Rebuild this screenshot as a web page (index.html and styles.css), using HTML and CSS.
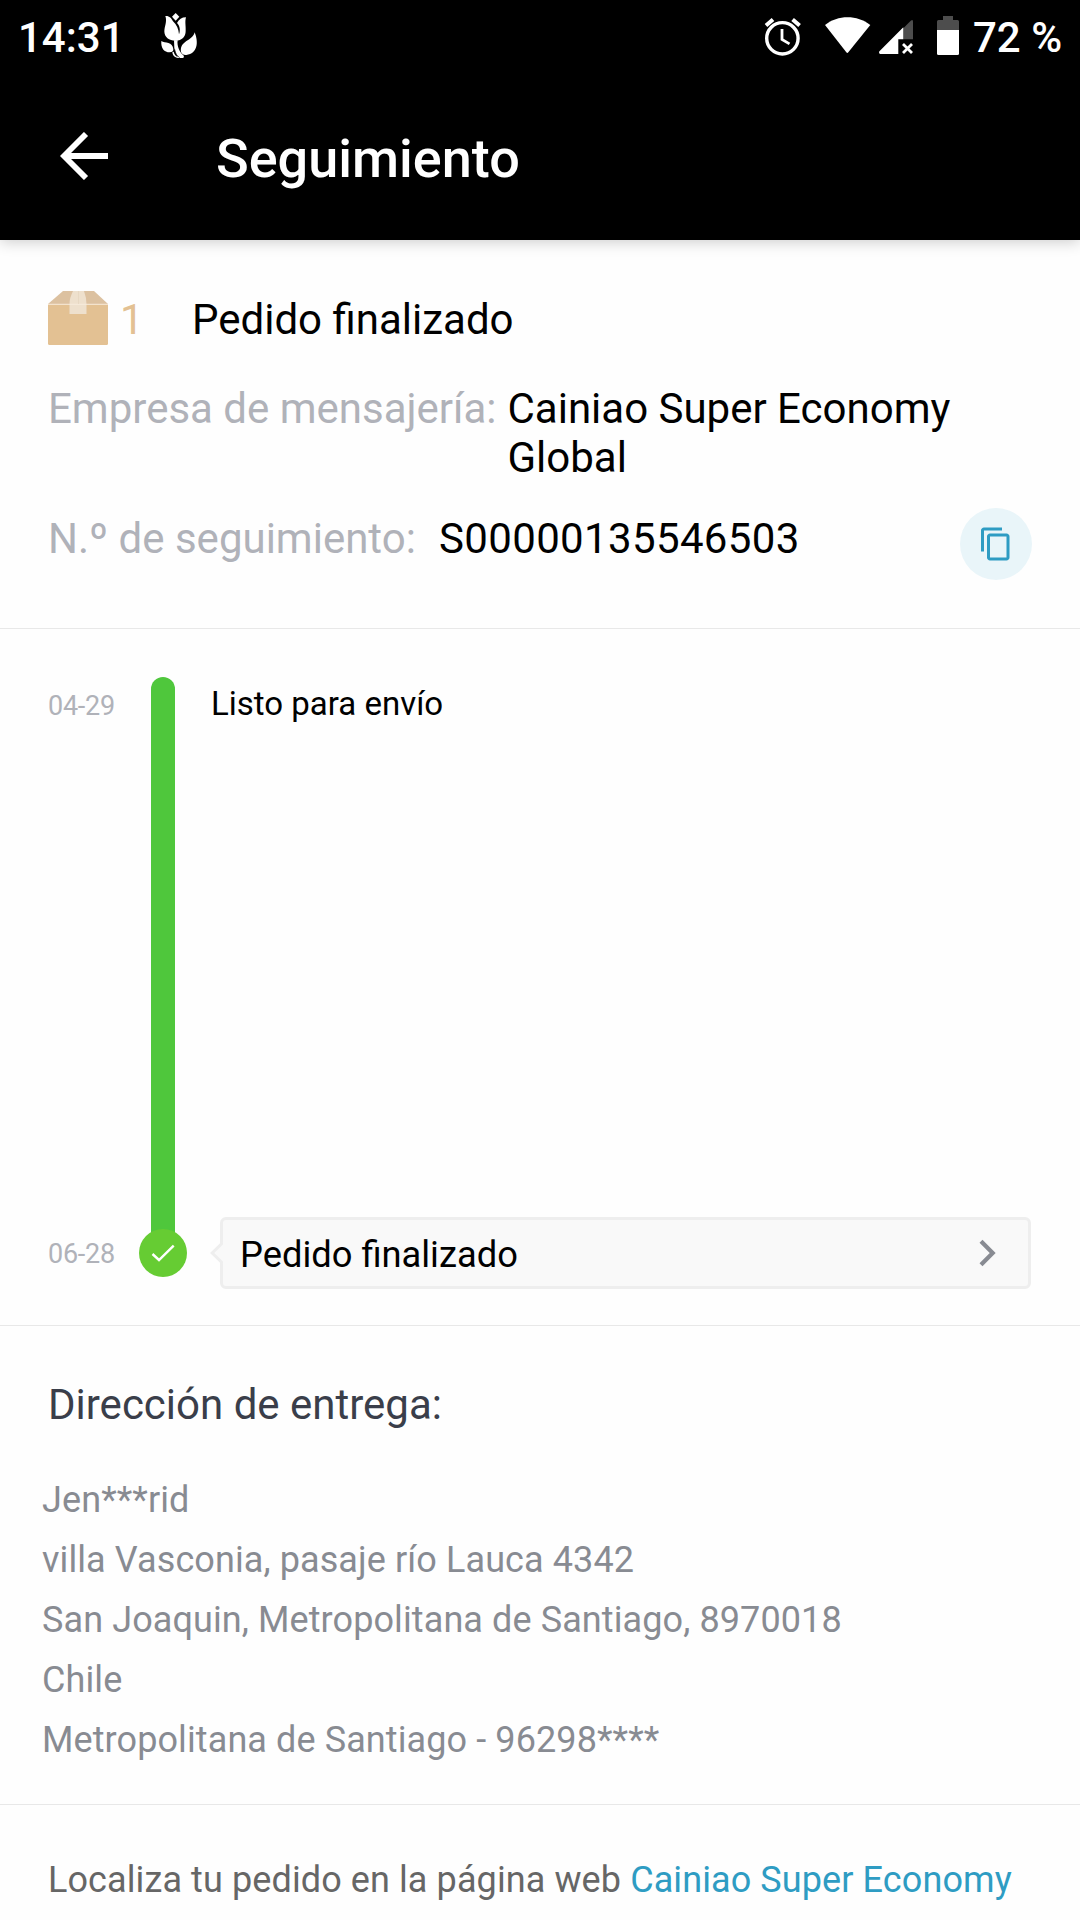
FILE: index.html
```html
<!DOCTYPE html>
<html lang="es">
<head>
<meta charset="utf-8">
<title>Seguimiento</title>
<link rel="stylesheet" href="styles.css">
</head>
<body>
<header class="top">
  <div class="status">
    <span class="clock">14:31</span>
    <svg class="tulip" width="40" height="48" viewBox="480 36 120 144" fill="#fff">
      <path d="M527 39l11 11-11 12-11-12z"/>
      <path d="M496 48C508 47 514 54 519 64C530 74 536 87 537 103C542 90 539 76 531 69C537 58 545 52 558 52C554 66 558 77 557 93C557 110 546 122 527 122C507 122 493 112 493 94C493 79 502 65 496 48z"/>
      <path d="M484 123C495 130 518 124 520 148C520 154 517 157 509 157C493 157 482 145 484 123z"/>
      <path d="M584 97C596 127 593 161 559 165C551 166 546 162 543 156C539 120 577 125 584 97z"/>
      <path d="M522 121H533C530 138 539 157 550 166C553 169 552 174 548 174H535C523 173 518 166 517 157L521 155C523 162 526 168 534 171C527 162 525 153 523 144z"/>
      <path d="M524 148C526 160 531 168 539 173" fill="none" stroke="#000" stroke-width="2"/>
    </svg>
    <div class="indicators">
      <svg class="alarm" width="38" height="40" viewBox="764 17 38 40" fill="none" stroke="#fff">
        <circle cx="782.4" cy="38.3" r="15.7" stroke-width="3.4"/>
        <path d="M782 29v10.5l7.5 4.4" stroke-width="2.8"/>
        <path d="M766 25.4l7-6M799.600 25.400l-7-6" stroke-width="4"/>
      </svg>
      <svg class="wifi" width="48" height="38" viewBox="824 16 48 38" fill="#fff">
        <path d="M825 25C838 14.700 857 14.700 870.300 25L848.300 52.300Q847.300 53.500 846.300 52.300z"/>
      </svg>
      <svg class="signal" width="36" height="36" viewBox="878 19 36 36">
        <path d="M903.300 28.300L911 20.600Q913 19 913 21.500V39.300H903.300z" fill="#4d4d4d"/>
        <path d="M903.300 27.300V39.300H898.300V54H880Q878.500 53.500 879.200 51.600z" fill="#fff"/>
        <path d="M903 44l9 9M912 44l-9 9" stroke="#fff" stroke-width="2.8"/>
      </svg>
      <svg class="battery" width="22" height="40" viewBox="937 16 22 40">
        <path d="M943 16h10v4h4.500q1.500 0 1.500 1.500V31H937V21.500q0-1.500 1.500-1.500H943z" fill="#4d4d4d"/>
        <path d="M937 30h22v23.500q0 1.500-1.500 1.500h-19q-1.500 0-1.500-1.500z" fill="#fff"/>
      </svg>
      <span class="charge">72 %</span>
    </div>
  </div>
  <div class="toolbar">
    <svg class="back" width="48" height="48" viewBox="0 0 48 48" fill="none" stroke="#fff" stroke-width="5.800">
      <path d="M26 2L4 24l22 22M4 24h44"/>
    </svg>
    <h1 class="title">Seguimiento</h1>
  </div>
</header>

<main>
  <section class="summary">
    <div class="row package">
      <svg class="box" width="60" height="54" viewBox="0 0 60 54">
        <path d="M15 0h31l14 13H0z" fill="#dcc1a0"/>
        <path d="M0 13h60v39.500q0 1.500-1.500 1.500h-57Q0 54 0 52.500z" fill="#e3c193"/>
        <path d="M25 0h11q2.500 7 2.500 13v10h-17V13q0-6 3.500-13z" fill="#eee0cd"/>
        <path d="M0 13.300h60" stroke="#f7ecdd"/>
        <path d="M30.500 0v13" stroke="#e3d2bc" stroke-width=".6"/>
      </svg>
      <span class="count">1</span>
      <span class="state">Pedido finalizado</span>
    </div>
    <div class="row carrier">
      <span class="label">Empresa de mensajería:</span>
      <span class="carrier-name">Cainiao Super Economy Global</span>
    </div>
    <div class="row number">
      <span class="label">N.º de seguimiento:</span>
      <span class="code">S00000135546503</span>
      <span class="copy">
        <svg width="36" height="36" viewBox="0 0 24 24" fill="#2e9cc3"><path d="M16 1H4c-1.100 0-2 .9-2 2v14h2V3h12V1zm3 4H8c-1.100 0-2 .9-2 2v14c0 1.100.9 2 2 2h11c1.100 0 2-.9 2-2V7c0-1.100-.9-2-2-2zm0 16H8V7h11v14z"/></svg>
      </span>
    </div>
  </section>

  <section class="timeline">
    <div class="dates"><span>04-29</span><span>06-28</span></div>
    <div class="track">
      <div class="bar"></div>
      <div class="done">
        <svg width="48" height="48" viewBox="0 0 48 48" fill="none" stroke="#fff" stroke-width="2.400"><path d="M13.500 25l6.500 6L34.700 16.700"/></svg>
      </div>
    </div>
    <div class="events">
      <span class="first">Listo para envío</span>
      <div class="last">
        <svg class="notch" width="13" height="22" viewBox="0 0 13 22"><path d="M13 .5L2.200 11 13 21.500" fill="#f9f9f9" stroke="#eee" stroke-width="3"/></svg>
        <span class="last-text">Pedido finalizado</span>
        <svg class="chevron" width="18" height="28" viewBox="0 0 18 28" fill="none" stroke="#888b92" stroke-width="4.200"><path d="M2 2.200L13.700 14 2 25.800"/></svg>
      </div>
    </div>
  </section>

  <section class="delivery">
    <h2>Dirección de entrega:</h2>
    <address>Jen***rid<br>villa Vasconia, pasaje río Lauca 4342<br>San Joaquin, Metropolitana de Santiago, 8970018<br>Chile<br>Metropolitana de Santiago - 96298****</address>
  </section>

  <section class="locate">Localiza tu pedido en la página web <a>Cainiao Super Economy</a></section>
</main>
</body>
</html>
```
FILE: styles.css
```css
* { box-sizing: border-box; }

body {
  margin: 0;
  width: 1080px;
  height: 1920px;
  overflow: hidden;
  background: #fefefe;
  color: #000;
  font-family: Roboto, sans-serif;
  font-size: 42px;
  line-height: 49px;
}

svg { display: block; flex: none; }
span { white-space: nowrap; }

.top {
  height: 240px;
  background: #000;
  color: #fff;
  box-shadow: 0 2px 14px rgba(0, 0, 0, .2);
}

.status {
  display: flex;
  height: 72px;
  padding: 0 18px;
  font-weight: 500;
}
.clock { width: 142px; padding-top: 13px; }
.tulip { margin-top: 12px; }
.indicators { display: flex; margin-left: auto; }
.alarm { margin-top: 17px; }
.wifi { margin: 16px 0 0 22px; }
.signal { margin: 19px 0 0 6px; }
.battery { margin: 16px 0 0 23px; }
.charge { width: 89px; margin-left: 14px; padding-top: 13px; }

.toolbar {
  display: flex;
  align-items: flex-start;
  height: 168px;
  padding-left: 60px;
}
.back { margin-top: 60px; }
.title {
  margin: 55px 0 0 108px;
  font-size: 54px;
  line-height: 64px;
  font-weight: 500;
}

.summary {
  height: 389px;
  padding: 51px 48px 0;
  border-bottom: 1px solid #e8e8e8;
}
.row { display: flex; }
.package { height: 92px; }
.count { width: 72px; margin-left: 12px; padding-top: 4px; color: #e3c193; }
.state { padding-top: 4px; }
.label { color: #b0b2b9; }
.carrier { padding-top: 1px; height: 125px; }
.carrier .label { width: 459.5px; padding-top: 0; }
.carrier-name { width: 470px; white-space: normal; }
.number { align-items: flex-start; }
.number .label { width: 391px; padding-top: 6px; }
.code { padding-top: 6px; letter-spacing: .35px; }
.copy {
  display: grid;
  place-items: center;
  width: 72px;
  height: 72px;
  margin-left: auto;
  border-radius: 50%;
  background: #e9f5f9;
}

.timeline {
  display: flex;
  height: 697px;
  padding: 48px 49px 36px 48px;
  border-bottom: 1px solid #e8e8e8;
}
.dates {
  display: flex;
  flex-direction: column;
  justify-content: space-between;
  width: 91px;
  padding: 13px 0 19px;
  color: #b0b2b9;
  font-size: 27px;
  line-height: 32px;
  letter-spacing: -.25px;
}
.track { display: flex; flex-direction: column; align-items: center; width: 48px; }
.bar { width: 24px; height: 570px; border-radius: 12px 12px 0 0; background: #4fc73c; }
.done {
  width: 48px;
  height: 48px;
  margin-top: -18px;
  border-radius: 50%;
  background: #66cc33;
}
.events {
  display: flex;
  flex: 1;
  flex-direction: column;
  justify-content: space-between;
  padding-left: 24px;
}
.first { padding: 8px 0 0; font-size: 33px; line-height: 38px; }
.last {
  position: relative;
  display: flex;
  align-items: center;
  justify-content: space-between;
  height: 72px;
  margin-left: 9px;
  padding: 0 31px 0 17px;
  border: 3px solid #eee;
  border-radius: 6px;
  background: #f9f9f9;
  font-size: 36.3px;
}
.last-text { padding-top: 3px; }
.notch { position: absolute; left: -13px; top: 22px; }

.delivery {
  height: 479px;
  padding: 54px 42px 0;
  border-bottom: 1px solid #e8e8e8;
}
h2 {
  margin: 0 0 0 6px;
  color: #3a3e4a;
  font-size: 42px;
  font-weight: 400;
}
address {
  margin-top: 41px;
  color: #888b92;
  font-size: 36px;
  font-style: normal;
  line-height: 60px;
  letter-spacing: .1px;
}

.locate {
  padding: 54px 48px 0;
  color: #666;
  font-size: 36px;
  line-height: 42px;
  letter-spacing: .1px;
  white-space: nowrap;
}
.locate a { color: #2e9cc3; }
```
